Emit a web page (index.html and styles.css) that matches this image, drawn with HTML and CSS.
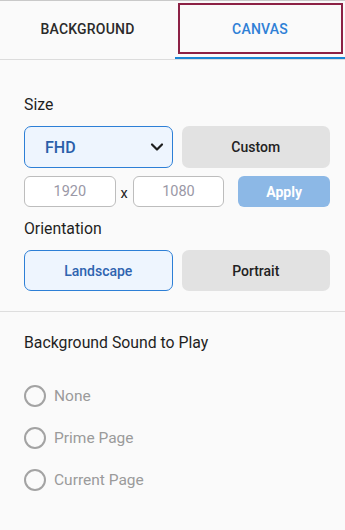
FILE: index.html
```html
<!DOCTYPE html>
<html>
<head>
<meta charset="utf-8">
<link rel="stylesheet" href="styles.css">
</head>
<body>
<div class="tabs">
  <div class="tab">BACKGROUND</div>
  <div class="tab active">CANVAS<span class="focus"></span></div>
</div>
<div class="panel">
  <div class="label lbl-size">Size</div>
  <div class="row2">
    <div class="select">FHD
      <svg class="chev" width="14" height="10" viewBox="0 0 14 10"><path d="M2 2.5 L7 7.5 L12 2.5" fill="none" stroke="#1e1e1e" stroke-width="2.2" stroke-linecap="round" stroke-linejoin="round"/></svg>
    </div>
    <div class="btn grey">Custom</div>
  </div>
  <div class="dims">
    <div class="inp">1920</div>
    <div class="times">x</div>
    <div class="inp">1080</div>
    <div class="apply">Apply</div>
  </div>
  <div class="label lbl-orient">Orientation</div>
  <div class="row2 orient">
    <div class="btn sel">Landscape</div>
    <div class="btn grey">Portrait</div>
  </div>
</div>
<div class="divider"></div>
<div class="panel">
  <div class="label lbl-sound">Background Sound to Play</div>
  <div class="radios">
    <div class="radio"><span class="circle"></span>None</div>
    <div class="radio"><span class="circle"></span>Prime Page</div>
    <div class="radio"><span class="circle"></span>Current Page</div>
  </div>
</div>
</body>
</html>
```
FILE: styles.css
```css
* { box-sizing: border-box; }
html, body { margin: 0; padding: 0; }
body {
  background: #fafafa;
  font-family: Roboto, "Noto Sans", sans-serif;
  color: #222;
  border-top: 1px solid #c9c9c9;
  width: 345px;
  height: 530px;
}
.tabs {
  display: grid;
  grid-template-columns: 175px 1fr;
  height: 59px;
  border-bottom: 1px solid #dcdcdc;
}
.tab {
  display: flex;
  align-items: center;
  justify-content: center;
  font-size: 14px;
  font-weight: 500;
  letter-spacing: 0.2px;
  color: #2a2a2a;
  padding-bottom: 2px;
  position: relative;
}
.tab.active {
  color: #2f80d6;
  box-shadow: inset 0 -2px 0 #1a86d6;
}
.focus {
  position: absolute;
  top: 2px;
  left: 3px;
  right: 2px;
  bottom: 5px;
  border: 2px solid #8c2145;
}
.panel {
  padding: 0 15px 0 24px;
}
.label {
  font-size: 15.8px;
  line-height: 20px;
  color: #1f1f1f;
}
.lbl-size { margin-top: 35px; }
.row2 {
  display: grid;
  grid-template-columns: 1fr 1fr;
  gap: 9px;
  margin-top: 11px;
  height: 42px;
}
.select {
  border: 1px solid #2d7fd6;
  background: #eef5fe;
  border-radius: 7px;
  display: flex;
  align-items: center;
  justify-content: space-between;
  padding: 0 8px 0 20px;
  font-size: 16px;
  font-weight: 500;
  color: #2a5ea9;
}
.btn {
  border-radius: 7px;
  display: flex;
  align-items: center;
  justify-content: center;
  font-size: 14px;
  font-weight: 500;
}
.btn.grey {
  background: #e2e2e2;
  color: #222;
}
.btn.sel {
  border: 1px solid #2d7fd6;
  background: #eef5fe;
  color: #2f64b0;
}
.dims {
  display: flex;
  align-items: center;
  margin-top: 8px;
  height: 31px;
}
.inp {
  width: 92px;
  height: 31px;
  border: 1px solid #bdbdbd;
  border-radius: 6px;
  background: #fff;
  display: flex;
  align-items: center;
  justify-content: center;
  font-size: 14.5px;
  color: #9a98a6;
}
.times {
  width: 17px;
  text-align: center;
  font-size: 14.5px;
  color: #222;
  padding-top: 4px;
}
.apply {
  margin-left: 14px;
  width: 92px;
  height: 31px;
  border-radius: 6px;
  background: #8cb8e6;
  color: #fff;
  font-size: 14px;
  font-weight: 700;
  display: flex;
  align-items: center;
  justify-content: center;
}
.lbl-orient { margin-top: 12px; }
.orient { margin-top: 11px; height: 41px; }
.divider {
  margin-top: 20px;
  height: 1px;
  background: #dedede;
}
.lbl-sound { margin-top: 21px; }
.radios { margin-top: 22px; }
.radio {
  height: 42px;
  display: flex;
  align-items: center;
  font-size: 15.5px;
  color: #9b9b9b;
}
.circle {
  width: 22px;
  height: 22px;
  border: 2px solid #a3a3a3;
  border-radius: 50%;
  margin-right: 8px;
}
```
